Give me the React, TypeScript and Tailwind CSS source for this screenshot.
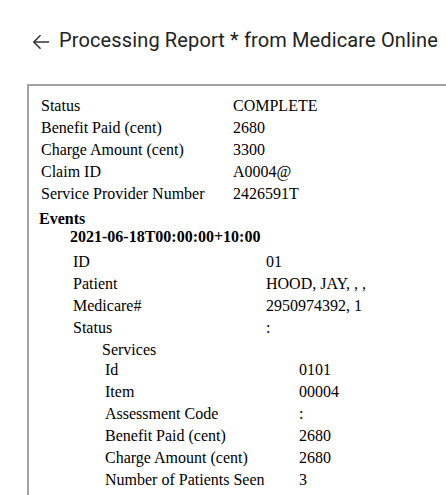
import React from "react";

const top: [string, string][] = [
  ["Status", "COMPLETE"],
  ["Benefit Paid (cent)", "2680"],
  ["Charge Amount (cent)", "3300"],
  ["Claim ID", "A0004@"],
  ["Service Provider Number", "2426591T"],
];

const evt: [string, string][] = [
  ["ID", "01"],
  ["Patient", "HOOD, JAY, , ,"],
  ["Medicare#", "2950974392, 1"],
  ["Status", ":"],
];

const svc: [string, string][] = [
  ["Id", "0101"],
  ["Item", "00004"],
  ["Assessment Code", ":"],
  ["Benefit Paid (cent)", "2680"],
  ["Charge Amount (cent)", "2680"],
  ["Number of Patients Seen", "3"],
];

export default function App() {
  return (
    <div className="w-[446px] h-[495px] overflow-hidden bg-white">
      <div className="flex items-start pl-[33px] pt-[28px]">
        <svg width="16" height="16" viewBox="0 0 16 16" className="mt-[6px] text-[#333]" fill="none" stroke="currentColor" strokeWidth="1.5">
          <path d="M16 8H1.2" />
          <path d="M7.5 1.2 0.9 8l6.6 6.8" />
        </svg>
        <div className="ml-[10px] text-[20px] leading-[24px] tracking-[0.13px] text-[#222] whitespace-nowrap" style={{ fontFamily: "Roboto, sans-serif" }}>
          Processing Report * from Medicare Online
        </div>
      </div>
      <div
        className="mt-[32px] ml-[27px] w-[460px] h-[430px] border-2 border-r-0 border-[#a3a3a3] pt-[9px] text-[16px] text-black whitespace-nowrap"
        style={{ fontFamily: '"Liberation Serif", "Times New Roman", serif' }}
      >
        {top.map(([k, v]) => (
          <div key={k} className="flex h-[22px] leading-[22px] ml-[12px]">
            <div className="w-[192px]">{k}</div>
            <div>{v}</div>
          </div>
        ))}
        <div className="mt-[3px] h-[18px] leading-[22px] ml-[10px] font-bold">Events</div>
        <div className="h-[25px] leading-[22px] ml-[41px] font-bold">2021-06-18T00:00:00+10:00</div>
        {evt.map(([k, v]) => (
          <div key={k} className="flex h-[22px] leading-[22px] ml-[44px]">
            <div className="w-[193px]">{k}</div>
            <div>{v}</div>
          </div>
        ))}
        <div className="h-[20px] leading-[22px] ml-[73px]">Services</div>
        {svc.map(([k, v]) => (
          <div key={k + v} className="flex h-[22px] leading-[22px] ml-[76px]">
            <div className="w-[194px]">{k}</div>
            <div>{v}</div>
          </div>
        ))}
      </div>
    </div>
  );
}
